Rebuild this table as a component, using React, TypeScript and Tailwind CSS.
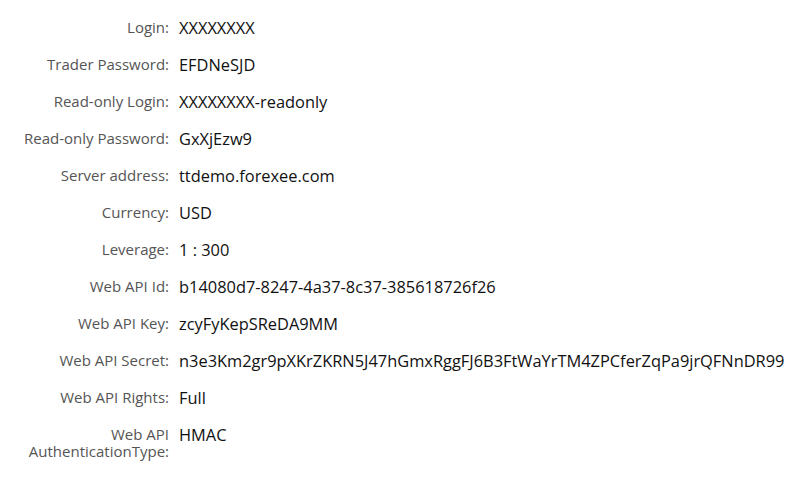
const rows: [string, string][] = [
  ["Login:", "XXXXXXXX"],
  ["Trader Password:", "EFDNeSJD"],
  ["Read-only Login:", "XXXXXXXX-readonly"],
  ["Read-only Password:", "GxXjEzw9"],
  ["Server address:", "ttdemo.forexee.com"],
  ["Currency:", "USD"],
  ["Leverage:", "1 : 300"],
  ["Web API Id:", "b14080d7-8247-4a37-8c37-385618726f26"],
  ["Web API Key:", "zcyFyKepSReDA9MM"],
  ["Web API Secret:", "n3e3Km2gr9pXKrZKRN5J47hGmxRggFJ6B3FtWaYrTM4ZPCferZqPa9jrQFNnDR99"],
  ["Web API Rights:", "Full"],
  ["Web API AuthenticationType:", "HMAC"],
];

export default function App() {
  return (
    <div className="w-[800px] h-[480px] bg-white pt-[19px] font-['Open_Sans',sans-serif]">
      {rows.map(([label, value]) => (
        <div key={label} className="flex items-start h-[37px]">
          <div className="w-[169px] shrink-0 text-right text-[15px] leading-[17px] text-[#555]">{label}</div>
          <div className="pl-[10px] text-[16.4px] leading-[18px] font-medium text-[#111] whitespace-nowrap">{value}</div>
        </div>
      ))}
    </div>
  );
}
